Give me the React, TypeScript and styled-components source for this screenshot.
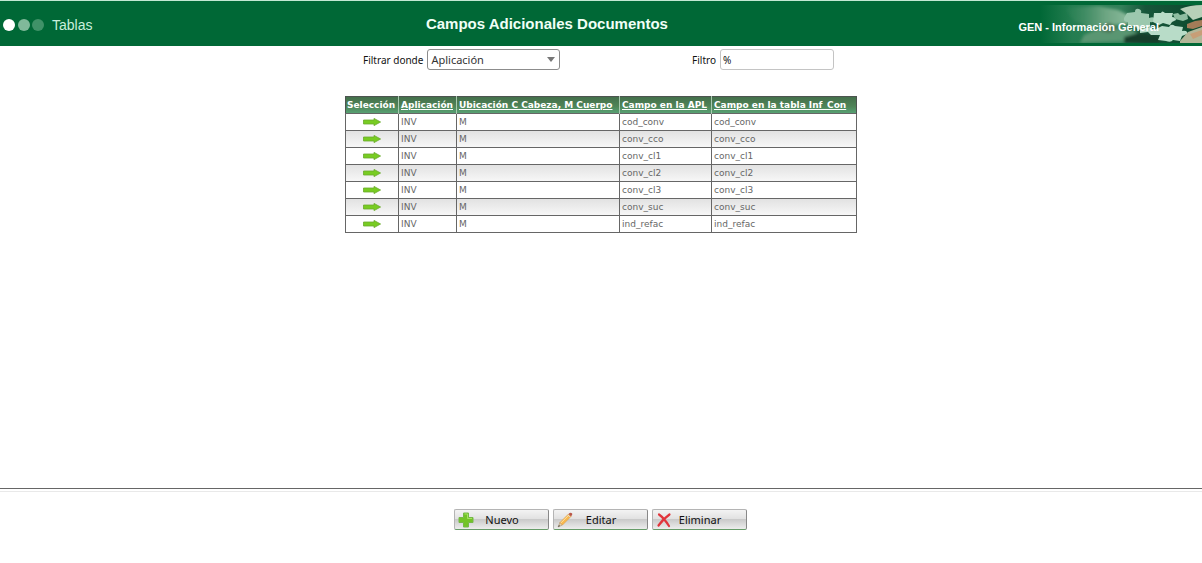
import React, { useId, useState } from "react";
import styled, { createGlobalStyle } from "styled-components";

const GlobalStyle = createGlobalStyle`
  * { box-sizing: border-box; }
  body {
    margin: 0;
    background: #fff;
    color: #111;
    font-family: "Noto Sans", "Open Sans", sans-serif;
  }
`;

const Page = styled.div`
  display: flex;
  flex-direction: column;
  min-height: 100vh;
`;

const Header = styled.header`
  display: grid;
  grid-template-columns: 12% 1fr 21%;
  align-items: center;
  height: 46px;
  background: #006836;
  border-top: 1px solid #c3e8d3;
  color: #fff;
  font-family: "Liberation Sans", Arial, sans-serif;
`;

const Section = styled.div`
  display: flex;
  align-items: center;
  gap: 7px;
  padding: 2px 0 0 3px;
  color: #c9efdb;
  font-size: 14px;
`;

const Dots = styled.svg`
  display: block;
  width: 42px;
  height: 14px;
`;

const Title = styled.h1`
  margin: 0;
  text-align: center;
  font-size: 15px;
  line-height: 20px;
  color: #f0fff6;
`;

const Module = styled.div`
  position: relative;
  display: flex;
  align-items: center;
  justify-content: flex-end;
  height: 100%;
  padding: 6px 43px 0 0;
  font-size: 11px;
  font-weight: bold;
  white-space: nowrap;
`;

const ModuleName = styled.span`
  position: relative;
`;

const Puzzle = styled.svg`
  position: absolute;
  right: 0;
  top: 4px;
  width: 162px;
  height: 38px;
`;

const Main = styled.main`
  flex: 1;
  width: 512px;
  max-width: 100%;
  margin: 0 auto;
`;

const Filters = styled.form`
  display: flex;
  justify-content: space-between;
  padding: 3px 23px 0 18px;
  margin-bottom: 26px;
`;

const Field = styled.div`
  display: flex;
  align-items: center;
`;

const Label = styled.label`
  margin-right: 4px;
  font-size: 10px;
`;

const SelectBox = styled.div`
  position: relative;
  display: flex;
`;

const Select = styled.select`
  appearance: none;
  width: 133px;
  height: 21px;
  padding: 0 20px 0 3px;
  border: 1px solid #8c8c8c;
  border-radius: 3px;
  background: #fff;
  color: #333;
  font: 11px "Noto Sans", sans-serif;
`;

const Caret = styled.svg`
  position: absolute;
  right: 5px;
  top: 8px;
  width: 8px;
  height: 5px;
  pointer-events: none;
`;

const TextInput = styled.input`
  width: 114px;
  height: 21px;
  padding: 1px 2px 0;
  border: 1px solid #c4c4c4;
  border-radius: 3px;
  background: #fff;
  color: #111;
  font: 10px "Noto Sans", sans-serif;
`;

const Table = styled.table`
  width: 100%;
  table-layout: fixed;
  border-collapse: collapse;
  border: 1px solid #4d5450;
  font-family: "DejaVu Sans", Verdana, sans-serif;
  font-size: 9px;
  line-height: 16px;
  color: #666;
`;

const Col = styled.col<{ $width: number }>`
  width: ${(p) => p.$width}px;
`;

const HeadRow = styled.tr`
  background: linear-gradient(#44704b, #4f8458 55%, #58a577);
`;

const HeadCell = styled.th`
  height: 17px;
  padding: 0 0 0 2px;
  border-right: 1px solid #a9c9b0;
  color: #fff;
  text-align: left;
  white-space: nowrap;

  &:first-child { padding-left: 1px; }
  &:last-child { border-right-color: #4d5450; }
`;

const SortLink = styled.a`
  color: inherit;
  text-decoration: underline;
`;

const Row = styled.tr`
  &:nth-child(even) { background: linear-gradient(#e2e2e2, #f8f8f8); }
`;

const Cell = styled.td`
  height: 17px;
  padding: 0 2px;
  border: 1px solid #666;
`;

const PickButton = styled.button`
  display: block;
  margin: 0 auto;
  padding: 0;
  border: 0;
  background: none;
  cursor: pointer;

  svg { display: block; width: 18px; height: 8px; }
`;

const Footer = styled.footer`
  display: flex;
  flex-direction: column;
  height: 75px;
  border-top: 1px solid #666;
`;

const Actions = styled.div`
  display: flex;
  justify-content: center;
  gap: 4px;
  margin-top: 2px;
  padding: 17px 2px 0 0;
  border-top: 1px solid #e9e9e9;
`;

const ActionButton = styled.button`
  display: flex;
  align-items: center;
  width: 95px;
  height: 21px;
  padding: 0 3px;
  border: 1px solid #b4b4b4;
  border-right-color: #888;
  border-bottom-color: #679c69;
  border-radius: 2px;
  background: linear-gradient(#f3f3f3, #e2e2e2 45%, #cacaca 50%, #ededed);
  color: #111;
  font: 11px "Noto Sans", sans-serif;
  cursor: pointer;

  svg { flex: none; width: 16px; height: 16px; }
`;

const ActionText = styled.span`
  flex: 1;
  padding-right: 14px;
  text-align: center;
`;

const PuzzleArt = () => (
  <Puzzle viewBox="0 0 162 38" preserveAspectRatio="none" aria-hidden="true">
    <defs>
      <linearGradient id="fade">
        <stop offset="0" stopColor="#006836" />
        <stop offset=".2" stopColor="#247d50" />
        <stop offset=".5" stopColor="#34805a" />
        <stop offset=".65" stopColor="#17563a" />
        <stop offset="1" stopColor="#0c4a2e" />
      </linearGradient>
      <linearGradient id="hand">
        <stop offset="0" stopColor="#438f66" stopOpacity="0" />
        <stop offset=".6" stopColor="#6ba481" />
        <stop offset="1" stopColor="#8fbd9f" />
      </linearGradient>
      <filter id="soft" x="-10%" y="-10%" width="120%" height="120%">
        <feGaussianBlur stdDeviation="1.5" />
      </filter>
    </defs>
    <rect width="162" height="38" fill="url(#fade)" />
    <g filter="url(#soft)">
      <path d="M24 3L58 1L78 5L92 12L88 19L70 20L54 24L34 16Z" fill="url(#hand)" />
      <path d="M44 30Q60 22 76 23L94 26L100 30L88 36L40 38Z" fill="#5a9672" />
      <path d="M60 21L70 18L78 23L70 28L61 26Z" fill="#4b7354" />
      <path d="M84 32L98 28L116 30L122 34L118 38H84Z" fill="#123c29" />
    </g>
    <path d="M87 8L95 7Q95 3 99 4Q102 5 101 8L109 9L109 13Q114 11 115 14Q114 18 110 17L110 22L102 22Q101 26 97 24L96 21L88 21L88 17Q83 17 84 13Z" fill="#9cc8ae" />
    <path d="M114 8L121 8Q122 5 125 8L133 8L132 12Q136 12 136 15L132 17L130 20L123 18L119 20L113 17Z" fill="#b9dcc7" />
    <path d="M100 24L110 22L114 25L122 21L129 22Q131 18 135 21L143 22L142 26Q148 25 147 29L142 31L140 36L133 35Q131 38 126 36L118 35L120 30L111 30L108 27L100 28Z" fill="#b8dcc8" />
    <path d="M133 9L138 8L140 10L147 8L148 14L143 16L135 14Z" fill="#8fbda1" />
    <path d="M140 4Q150 0 162 0V12L153 15L147 9Z" fill="#b7d0b8" />
    <path d="M147 19L155 16L162 15V21L153 24L147 23Z" fill="#a47c58" />
    <path d="M140 36L148 27L162 22V38H140Z" fill="#b3b698" />
    <path d="M150 29L162 25V30L153 34Z" fill="#c79e77" />
  </Puzzle>
);

const Arrow = () => (
  <svg viewBox="0 0 18 8" aria-hidden="true">
    <path d="M.5 2H11V.4L17.6 4L11 7.6V6H.5Z" fill="#78cc22" stroke="#69a92c" strokeWidth=".8" />
  </svg>
);

const PlusIcon = () => (
  <svg viewBox="0 0 16 16" aria-hidden="true">
    <path d="M5.500 1h5v4.500H15v5h-4.500V15h-5v-4.500H1v-5h4.500z" fill="#72c426" stroke="#74b848" />
    <path d="M6.500 2h3v4.500H14" fill="none" stroke="#a5e261" />
  </svg>
);

const PencilIcon = () => (
  <svg viewBox="0 0 16 16" aria-hidden="true">
    <path d="M1 15L3 10.500L5.500 13Z" fill="#e8cfaa" stroke="#9b8265" strokeWidth=".5" />
    <path d="M3 10.500L11.500 2L14 4.500L5.500 13Z" fill="#f8b84e" stroke="#dc9d48" strokeWidth=".6" />
    <path d="M4 10.800L12 2.900" stroke="#ffe2a1" />
    <path d="M11.500 2L12.600 .9Q14 .2 15.200 1.600Q15.800 2.700 14 4.500Z" fill="#b95749" />
    <path d="M10.700 2.800L13.200 5.300" stroke="#dedede" />
    <path d="M1 15L2 13L3 14Z" fill="#444" />
  </svg>
);

const CrossIcon = () => (
  <svg viewBox="0 0 16 16" aria-hidden="true">
    <path d="M3 2.500Q8 6 13 14M13.500 2.500Q7 7 2.500 13.500" fill="none" stroke="#e1353c" strokeWidth="2.200" strokeLinecap="round" />
  </svg>
);

const columns = [
  { title: "Selección", width: 53 },
  { title: "Aplicación", width: 58, sortable: true },
  { title: "Ubicación C Cabeza, M Cuerpo", width: 163, sortable: true },
  { title: "Campo en la APL", width: 92, sortable: true },
  { title: "Campo en la tabla Inf_Con", width: 145, sortable: true },
];

const fields = ["cod_conv", "conv_cco", "conv_cl1", "conv_cl2", "conv_cl3", "conv_suc", "ind_refac"];

const actions = [
  { label: "Nuevo", icon: <PlusIcon /> },
  { label: "Editar", icon: <PencilIcon /> },
  { label: "Eliminar", icon: <CrossIcon /> },
];

export default function App() {
  const id = useId();
  const [filter, setFilter] = useState("%");

  return (
    <Page>
      <GlobalStyle />
      <Header>
        <Section>
          <Dots viewBox="0 0 42 14" aria-hidden="true">
            <circle cx="6" cy="7" r="6" fill="#fff" />
            <circle cx="21" cy="7" r="6" fill="#80b99a" />
            <circle cx="35" cy="7" r="6" fill="#409268" />
          </Dots>
          Tablas
        </Section>
        <Title>Campos Adicionales Documentos</Title>
        <Module>
          <PuzzleArt />
          <ModuleName>GEN - Información General</ModuleName>
        </Module>
      </Header>
      <Main>
        <Filters onSubmit={(e) => e.preventDefault()}>
          <Field>
            <Label htmlFor={`${id}-by`}>Filtrar donde</Label>
            <SelectBox>
              <Select id={`${id}-by`}>
                <option>Aplicación</option>
              </Select>
              <Caret viewBox="0 0 8 5" aria-hidden="true">
                <path d="M0 0H8L4 5Z" fill="#777" />
              </Caret>
            </SelectBox>
          </Field>
          <Field>
            <Label htmlFor={`${id}-text`}>Filtro</Label>
            <TextInput id={`${id}-text`} value={filter} onChange={(e) => setFilter(e.target.value)} />
          </Field>
        </Filters>
        <Table>
          <colgroup>
            {columns.map((c) => <Col key={c.title} $width={c.width} />)}
          </colgroup>
          <thead>
            <HeadRow>
              {columns.map((c) => (
                <HeadCell key={c.title} scope="col">
                  {c.sortable ? <SortLink href="#">{c.title}</SortLink> : c.title}
                </HeadCell>
              ))}
            </HeadRow>
          </thead>
          <tbody>
            {fields.map((name) => (
              <Row key={name}>
                <Cell>
                  <PickButton type="button" aria-label={`Seleccionar ${name}`}><Arrow /></PickButton>
                </Cell>
                <Cell>INV</Cell>
                <Cell>M</Cell>
                <Cell>{name}</Cell>
                <Cell>{name}</Cell>
              </Row>
            ))}
          </tbody>
        </Table>
      </Main>
      <Footer>
        <Actions>
          {actions.map((a) => (
            <ActionButton key={a.label} type="button">
              {a.icon}
              <ActionText>{a.label}</ActionText>
            </ActionButton>
          ))}
        </Actions>
      </Footer>
    </Page>
  );
}
